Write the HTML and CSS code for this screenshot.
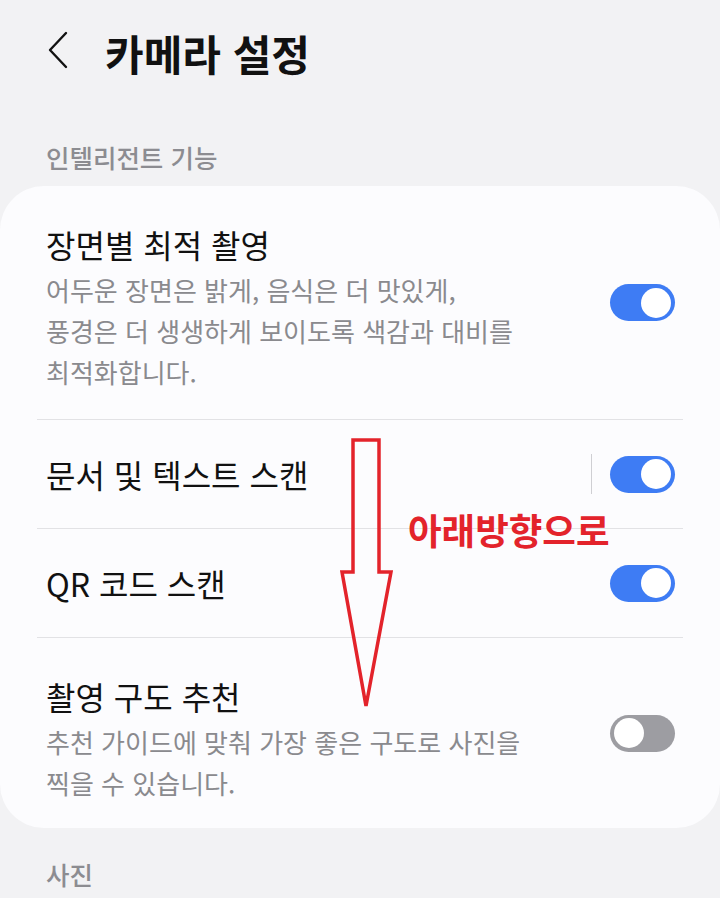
FILE: index.html
```html
<!DOCTYPE html>
<html lang="ko">
	<head>
		<meta charset="utf-8">
		<title>카메라 설정</title>
		<link rel="stylesheet" href="styles.css">
	</head>
	<body>
		<div class="screen">
			<div class="header">
				<svg class="back" width="24" height="38" viewBox="0 0 24 38">
					<polyline points="20,2 4,19 20,36" fill="none" stroke="#111" stroke-width="2.4" stroke-linecap="round" stroke-linejoin="round"/>
				</svg>
				<h1 class="title">카메라 설정</h1>
			</div>

			<div class="label label-first">인텔리전트 기능</div>

			<div class="card">
				<div class="row row-tall">
					<div class="text">
						<div class="name">장면별 최적 촬영</div>
						<div class="desc">어두운 장면은 밝게, 음식은 더 맛있게,<br>풍경은 더 생생하게 보이도록 색감과 대비를<br>최적화합니다.</div>
					</div>
					<div class="switch on"><span class="knob"></span></div>
				</div>
				<div class="row">
					<div class="text">
						<div class="name">문서 및 텍스트 스캔</div>
					</div>
					<div class="sep"></div>
					<div class="switch on"><span class="knob"></span></div>
				</div>
				<div class="row">
					<div class="text">
						<div class="name">QR 코드 스캔</div>
					</div>
					<div class="switch on"><span class="knob"></span></div>
				</div>
				<div class="row row-tall row-last">
					<div class="text">
						<div class="name">촬영 구도 추천</div>
						<div class="desc">추천 가이드에 맞춰 가장 좋은 구도로 사진을<br>찍을 수 있습니다.</div>
					</div>
					<div class="switch"><span class="knob"></span></div>
				</div>
			</div>

			<div class="label">사진</div>

			<!-- annotation drawn over the screenshot -->
			<svg class="arrow" width="60" height="280" viewBox="0 0 60 280">
				<polygon points="13,2 39,2 39,134 51,134 26,268 2,134 13,134" fill="none" stroke="#e3232b" stroke-width="3.5" stroke-linejoin="miter"/>
			</svg>
			<div class="note">아래방향으로</div>
		</div>
	</body>
</html>
```

FILE: styles.css
```css
body{
	margin: 0;
	background: #f2f2f4;
	font-family: "Noto Sans CJK KR", "Noto Sans", sans-serif;
	color: #111;
}
.screen{
	position: relative;
	width: 720px;
	height: 898px;
	overflow: hidden;
}
.header{
	height: 106px;
	display: flex;
	align-items: center;
	padding-left: 46px;
	box-sizing: border-box;
}
.back{
	margin-top: -6px;
}
.title{
	margin: 0 0 0 35px;
	font-size: 42px;
	font-weight: 700;
	line-height: 48px;
}
.label{
	padding: 30px 0 0 46px;
	font-size: 25.5px;
	font-weight: 500;
	color: #8c8c91;
	line-height: 32px;
}
.label-first{
	padding-top: 35px;
	padding-bottom: 13px;
}
.card{
	background: #fcfcfe;
	border-radius: 44px;
	padding: 0 37px;
}
.row{
	display: flex;
	align-items: center;
	height: 108px;
	padding: 0 8px 0 9px;
	border-top: 1px solid #e2e2e5;
}
.row:first-child{
	border-top: none;
}
.row-tall{
	height: auto;
}
.row-tall .text{
	padding: 38px 0 27px;
}
.row-last .text{
	padding-bottom: 25px;
}
.text{
	flex: 1;
}
.name{
	font-size: 32px;
	line-height: 40px;
}
.desc{
	margin-top: 5px;
	font-size: 26px;
	line-height: 41px;
	color: #8a8a8e;
}
.sep{
	width: 1px;
	height: 40px;
	background: #cfcfd3;
	margin-right: 18px;
}
.switch{
	position: relative;
	width: 65px;
	height: 37px;
	border-radius: 19px;
	background: #9d9da2;
	flex-shrink: 0;
}
.switch.on{
	background: #3e7cf4;
}
.knob{
	position: absolute;
	top: 3.5px;
	left: 4px;
	width: 30px;
	height: 30px;
	border-radius: 50%;
	background: #fff;
}
.switch.on .knob{
	left: auto;
	right: 4px;
}
.arrow{
	position: absolute;
	left: 340px;
	top: 438px;
}
.note{
	position: absolute;
	left: 408px;
	top: 506px;
	font-size: 36.5px;
	font-weight: 700;
	color: #e3232b;
	line-height: 48px;
}
```
